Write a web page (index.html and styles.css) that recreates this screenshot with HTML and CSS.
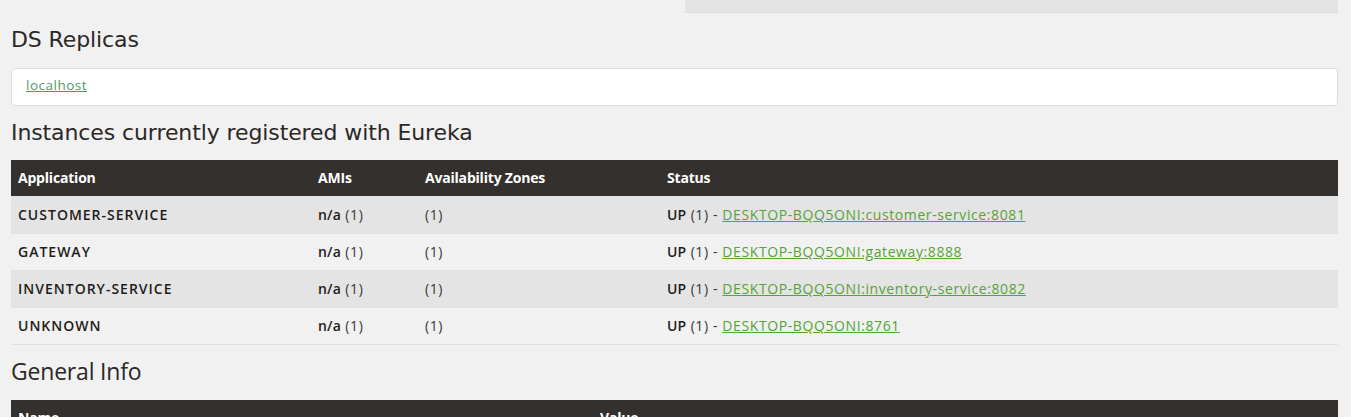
FILE: index.html
```html
<!DOCTYPE html>
<html>
<head>
<meta charset="utf-8">
<title>Eureka</title>
<link rel="stylesheet" href="styles.css">
</head>
<body>
<div class="container">
  <div class="top-row">
    <div class="top-left"></div>
    <div class="top-box"></div>
  </div>

  <h2 class="title">DS Replicas</h2>
  <div class="well">
    <a href="#" class="link">localhost</a>
  </div>

  <h2 class="title title-tight">Instances currently registered with Eureka</h2>
  <table class="table">
    <colgroup>
      <col class="c1"><col class="c2"><col class="c3"><col>
    </colgroup>
    <thead>
      <tr><th>Application</th><th>AMIs</th><th>Availability Zones</th><th>Status</th></tr>
    </thead>
    <tbody>
      <tr class="odd"><td class="app">CUSTOMER-SERVICE</td><td><b>n/a</b> (1)</td><td>(1)</td><td><b>UP</b> (1) - <a href="#" class="link">DESKTOP-BQQ5ONI:customer-service:8081</a></td></tr>
      <tr><td class="app">GATEWAY</td><td><b>n/a</b> (1)</td><td>(1)</td><td><b>UP</b> (1) - <a href="#" class="link">DESKTOP-BQQ5ONI:gateway:8888</a></td></tr>
      <tr class="odd"><td class="app">INVENTORY-SERVICE</td><td><b>n/a</b> (1)</td><td>(1)</td><td><b>UP</b> (1) - <a href="#" class="link">DESKTOP-BQQ5ONI:inventory-service:8082</a></td></tr>
      <tr class="last"><td class="app">UNKNOWN</td><td><b>n/a</b> (1)</td><td>(1)</td><td><b>UP</b> (1) - <a href="#" class="link">DESKTOP-BQQ5ONI:8761</a></td></tr>
    </tbody>
  </table>

  <h2 class="title title-alt">General Info</h2>
  <table class="table">
    <colgroup><col class="g1"><col></colgroup>
    <thead>
      <tr><th>Name</th><th>Value</th></tr>
    </thead>
  </table>
</div>
</body>
</html>
```

FILE: styles.css
```css
html, body {
  margin: 0;
  padding: 0;
  background: #f1f1f1;
  color: #2d2a28;
  font-family: "Open Sans", "DejaVu Sans", sans-serif;
  font-size: 14px;
  overflow: hidden;
}

.container {
  margin-left: 11px;
  width: 1327px;
}

.top-row {
  display: flex;
}

.top-left {
  flex: 0 0 674px;
}

.top-box {
  flex: 1;
  height: 12px;
  background: #e4e4e4;
  border-bottom: 1px solid #dcdcde;
}

.title {
  font-family: "DejaVu Sans", sans-serif;
  font-weight: normal;
  font-size: 22px;
  line-height: 26px;
  margin: 14px 0 15px;
  color: #2b2826;
  letter-spacing: -0.1px;
}

.title-tight {
  margin-top: 14px;
  margin-bottom: 14px;
}

.title-alt {
  font-family: "Open Sans", sans-serif;
  font-size: 23px;
  letter-spacing: -0.2px;
  margin-top: 13px;
  margin-bottom: 16px;
}

.well {
  background: #fff;
  border: 1px solid #dcdcdc;
  border-radius: 4px;
  height: 36px;
  display: flex;
  align-items: center;
  padding-left: 14px;
}

.link {
  color: #57a237;
  text-decoration: underline;
}

.well .link {
  color: #4f9a63;
  font-size: 13.5px;
  letter-spacing: 0.5px;
  margin-top: -4px;
}

.table {
  width: 100%;
  border-collapse: collapse;
  table-layout: fixed;
}

.c1 { width: 300px; }
.c2 { width: 107px; }
.c3 { width: 242px; }
.g1 { width: 582px; }

.table th {
  background: #34302d;
  color: #fff;
  text-align: left;
  font-weight: bold;
  font-size: 14px;
  height: 36px;
  padding: 0 7px;
  box-sizing: border-box;
  letter-spacing: -0.2px;
}

.table td {
  height: 36px;
  padding: 0 7px;
  border-top: 1px solid #dfdfe6;
  font-size: 14px;
  letter-spacing: 0.6px;
  color: #3a3633;
}

.table tr.last td {
  border-bottom: 1px solid #dfdfe6;
}

.table tr.odd td {
  background: #e4e4e4;
}

.table td b {
  font-weight: 600;
  color: #1f1c1a;
  letter-spacing: 0.2px;
}

.table td.app {
  font-weight: 600;
  letter-spacing: 1px;
  color: #1f1c1a;
}
```
